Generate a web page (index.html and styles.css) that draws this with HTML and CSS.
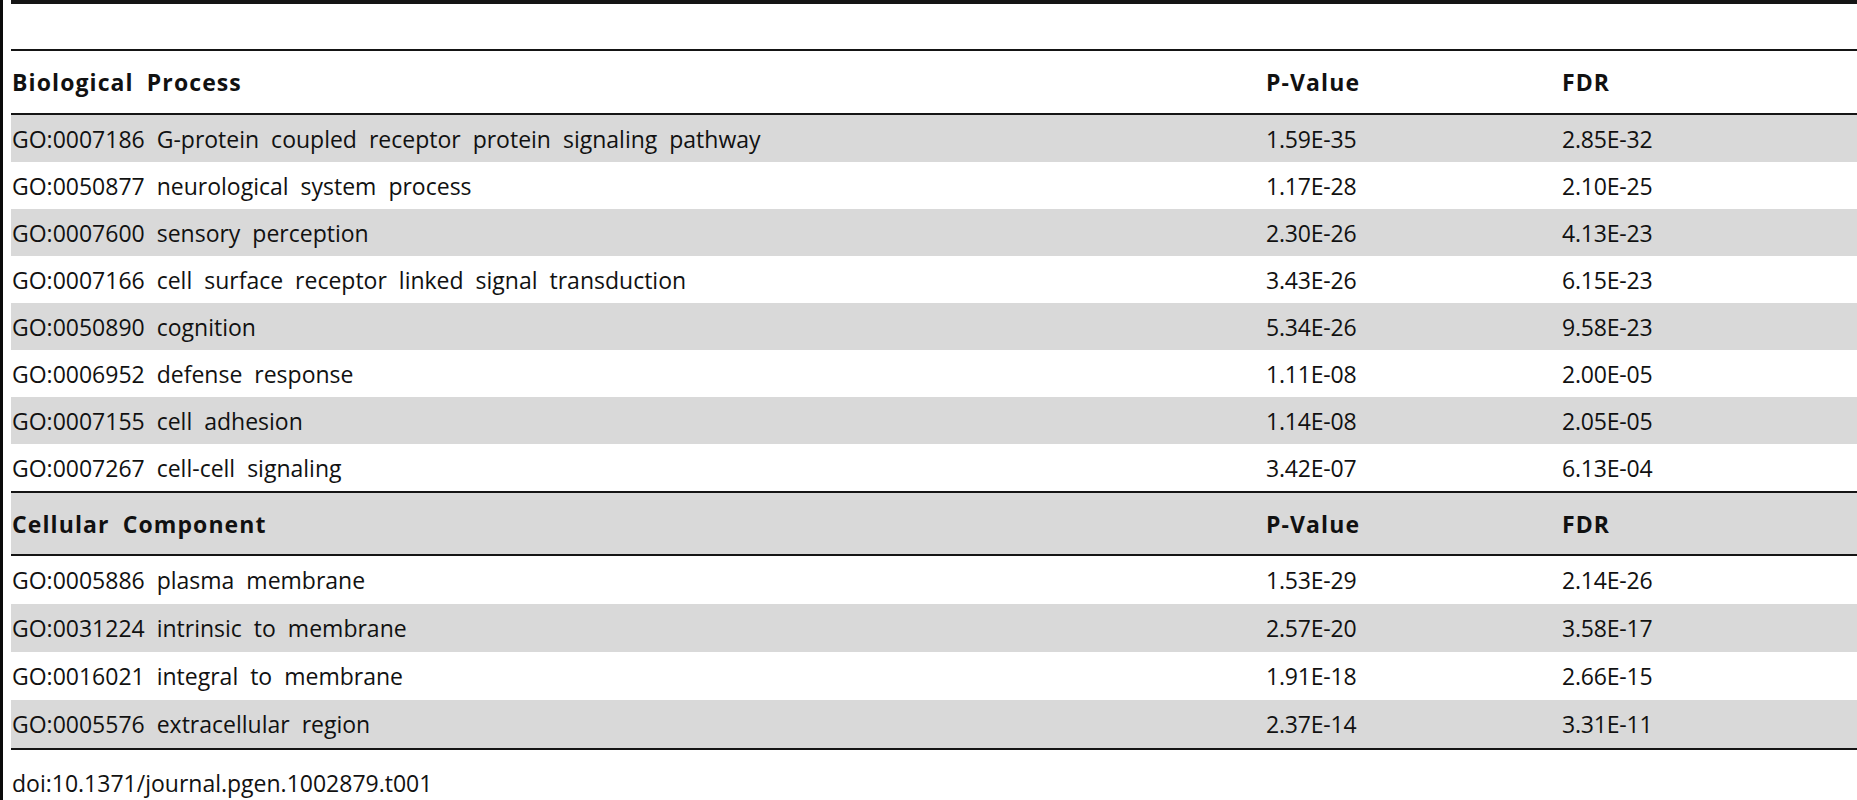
FILE: index.html
```html
<!DOCTYPE html>
<html>
<head>
<meta charset="utf-8">
<link rel="stylesheet" href="styles.css">
</head>
<body>
<div class="page">
  <div class="topbar"></div>
  <table class="go">
    <colgroup><col class="c-term"><col class="c-p"><col class="c-fdr"></colgroup>
    <tbody>
      <tr class="head"><th>Biological Process</th><th>P-Value</th><th>FDR</th></tr>
    </tbody>
    <tbody class="data">
      <tr class="alt"><td>GO:0007186 G-protein coupled receptor protein signaling pathway</td><td class="num">1.59E-35</td><td class="num">2.85E-32</td></tr>
      <tr><td>GO:0050877 neurological system process</td><td class="num">1.17E-28</td><td class="num">2.10E-25</td></tr>
      <tr class="alt"><td>GO:0007600 sensory perception</td><td class="num">2.30E-26</td><td class="num">4.13E-23</td></tr>
      <tr><td>GO:0007166 cell surface receptor linked signal transduction</td><td class="num">3.43E-26</td><td class="num">6.15E-23</td></tr>
      <tr class="alt"><td>GO:0050890 cognition</td><td class="num">5.34E-26</td><td class="num">9.58E-23</td></tr>
      <tr><td>GO:0006952 defense response</td><td class="num">1.11E-08</td><td class="num">2.00E-05</td></tr>
      <tr class="alt"><td>GO:0007155 cell adhesion</td><td class="num">1.14E-08</td><td class="num">2.05E-05</td></tr>
      <tr><td>GO:0007267 cell-cell signaling</td><td class="num">3.42E-07</td><td class="num">6.13E-04</td></tr>
    </tbody>
    <tbody class="second">
      <tr class="head alt"><th>Cellular Component</th><th>P-Value</th><th>FDR</th></tr>
    </tbody>
    <tbody class="data second">
      <tr><td>GO:0005886 plasma membrane</td><td class="num">1.53E-29</td><td class="num">2.14E-26</td></tr>
      <tr class="alt"><td>GO:0031224 intrinsic to membrane</td><td class="num">2.57E-20</td><td class="num">3.58E-17</td></tr>
      <tr><td>GO:0016021 integral to membrane</td><td class="num">1.91E-18</td><td class="num">2.66E-15</td></tr>
      <tr class="alt"><td>GO:0005576 extracellular region</td><td class="num">2.37E-14</td><td class="num">3.31E-11</td></tr>
    </tbody>
  </table>
  <div class="doi">doi:10.1371/journal.pgen.1002879.t001</div>
</div>
</body>
</html>
```

FILE: styles.css
```css
html, body {
  margin: 0;
  padding: 0;
  background: #ffffff;
}
body {
  font-family: "Open Sans", "Liberation Sans", sans-serif;
  color: #111111;
  overflow: hidden;
}
.page {
  border-left: 3px solid #0a0a0a;
  padding-left: 8px;
  height: 800px;
  box-sizing: border-box;
}
.topbar {
  height: 4px;
  background: #151515;
  margin-bottom: 45px;
}
.go {
  width: 100%;
  border-collapse: collapse;
  border-top: 2px solid #151515;
  border-bottom: 2px solid #151515;
  font-size: 23px;
  word-spacing: 6px;
}
.c-term { width: 1254px; }
.c-p { width: 296px; }
.go th, .go td {
  text-align: left;
  padding: 0 0 0 1px;
  white-space: nowrap;
}
.go th {
  font-weight: 700;
  height: 62px;
  letter-spacing: 1.1px;
}
.go td {
  height: 47px;
}
.go td.num {
  letter-spacing: -0.2px;
  word-spacing: 0;
}
.go .second th {
  height: 61px;
}
.go .second td {
  height: 48px;
}
.go .head {
  border-bottom: 2px solid #151515;
}
.go tbody + tbody .head {
  border-top: 2px solid #151515;
}
.go .alt {
  background: #d9d9d9;
}
.doi {
  font-size: 23px;
  margin-top: 17px;
  padding-left: 1px;
}
```
